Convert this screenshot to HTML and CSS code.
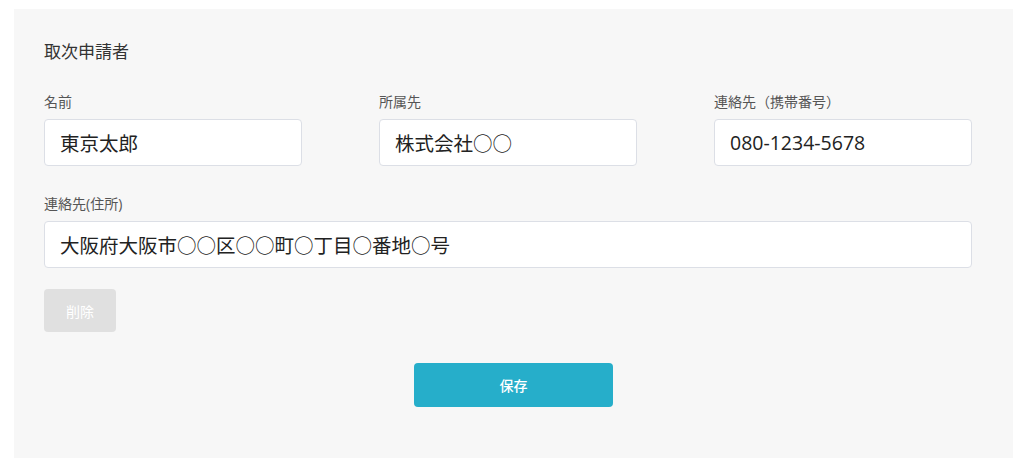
FILE: index.html
```html
<!DOCTYPE html>
<html lang="ja">

<head>
	<meta charset="UTF-8">
	<title>取次申請者</title>
	<meta name="viewport" content="width=device-width, initial-scale=1.0">
	<link rel="stylesheet" href="styles.css">
</head>

<body>
	<div class="panel">
		<h2 class="panel-title">取次申請者</h2>

		<div class="form-grid">
			<div class="field">
				<label for="name">名前</label>
				<input type="text" id="name" value="東京太郎">
			</div>
			<div class="field">
				<label for="company">所属先</label>
				<input type="text" id="company" value="株式会社○○">
			</div>
			<div class="field">
				<label for="tel">連絡先（携帯番号）</label>
				<input type="text" id="tel" value="080-1234-5678">
			</div>
			<div class="field field-wide">
				<label for="address">連絡先(住所)</label>
				<input type="text" id="address" value="大阪府大阪市○○区○○町○丁目○番地○号">
			</div>
		</div>

		<button class="btn-delete" disabled>削除</button>

		<div class="actions">
			<button class="btn-save">保存</button>
		</div>
	</div>
</body>

</html>
```

FILE: styles.css
```css
body {
	margin: 0;
	background: #fff;
	font-family: "Open Sans", "Noto Sans CJK JP", sans-serif;
	color: #333;
}

.panel {
	margin: 9px 11px 10px 14px;
	height: 449px;
	box-sizing: border-box;
	padding: 31px 30px 0 30px;
	background: #f7f7f7;
}

.panel-title {
	margin: 0 0 28px;
	font-size: 17px;
	line-height: 24px;
	font-weight: normal;
	color: #333;
}

.form-grid {
	display: grid;
	grid-template-columns: 258px 258px 258px;
	column-gap: 77px;
	row-gap: 28px;
}

.field-wide {
	grid-column: 1 / 4;
}

label {
	display: block;
	font-size: 14px;
	line-height: 20px;
	color: #555;
	margin-bottom: 7px;
}

input[type="text"] {
	display: block;
	width: 100%;
	height: 47px;
	box-sizing: border-box;
	padding: 0 15px;
	font-family: inherit;
	font-size: 19.5px;
	color: #222;
	background: #fff;
	border: 1px solid #dcdfe6;
	border-radius: 4px;
}

.btn-delete {
	display: block;
	margin-top: 21px;
	width: 72px;
	height: 43px;
	font-family: inherit;
	font-size: 14px;
	color: #fff;
	background: #e0e0e0;
	border: none;
	border-radius: 4px;
}

.actions {
	display: flex;
	justify-content: center;
	margin-top: 31px;
}

.btn-save {
	width: 199px;
	height: 44px;
	font-family: inherit;
	font-size: 14px;
	font-weight: 500;
	color: #fff;
	background: #26aeca;
	border: none;
	border-radius: 4px;
	cursor: pointer;
}
```
